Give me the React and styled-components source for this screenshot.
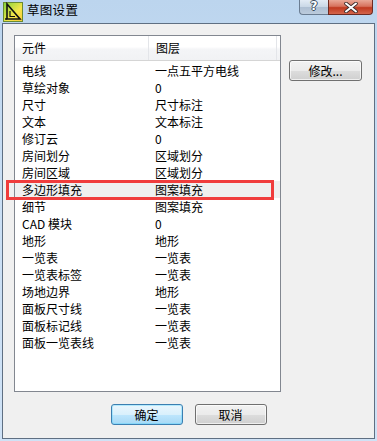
import React from "react";
import styled, { createGlobalStyle } from "styled-components";

const rows = [
  ["电线", "一点五平方电线"],
  ["草绘对象", "0"],
  ["尺寸", "尺寸标注"],
  ["文本", "文本标注"],
  ["修订云", "0"],
  ["房间划分", "区域划分"],
  ["房间区域", "区域划分"],
  ["多边形填充", "图案填充"],
  ["细节", "图案填充"],
  ["CAD 模块", "0"],
  ["地形", "地形"],
  ["一览表", "一览表"],
  ["一览表标签", "一览表"],
  ["场地边界", "地形"],
  ["面板尺寸线", "一览表"],
  ["面板标记线", "一览表"],
  ["面板一览表线", "一览表"],
];

const App = () => {
  return (
    <>
      <GlobalStyle />
      <Window>
        <TitleBar>
          <AppIcon width="20" height="20" viewBox="0 0 20 20">
            <defs>
              <linearGradient id="ig" x1="0" y1="0" x2="1" y2="1">
                <stop offset="0" stopColor="#7fd23a" />
                <stop offset="0.6" stopColor="#f4e64a" />
                <stop offset="1" stopColor="#f7c83a" />
              </linearGradient>
            </defs>
            <rect x="0.5" y="0.5" width="19" height="19" fill="url(#ig)" stroke="#6a8a30" />
            <path d="M4 2 L4 17 L17 17 Z" fill="none" stroke="#111" strokeWidth="1.6" />
            <path d="M7 9 L7 14.5 L12 14.5" fill="none" stroke="#111" strokeWidth="1.2" />
            <path d="M2 17 L4 17" stroke="#111" strokeWidth="1.6" />
          </AppIcon>
          <Title>草图设置</Title>
          <CaptionButtons>
            <HelpButton>?</HelpButton>
            <CloseButton>
              <svg width="14" height="11" viewBox="0 0 14 11">
                <path d="M2 1.5 L12 9.5 M12 1.5 L2 9.5" stroke="#3a2a2a" strokeWidth="3.6" strokeLinecap="round" />
                <path d="M2 1.5 L12 9.5 M12 1.5 L2 9.5" stroke="#fff" strokeWidth="2" strokeLinecap="round" />
              </svg>
            </CloseButton>
          </CaptionButtons>
        </TitleBar>
        <Panel>
          <Main>
            <ListBox>
              <Header>
                <HeadCell $w={134}>元件</HeadCell>
                <HeadCell $w={128}>图层</HeadCell>
                <HeadFill />
              </Header>
              <Rows>
                {rows.map(([a, b]) => (
                  <Row key={a} $hot={a === "多边形填充"}>
                    <Cell $w={134} $pad={7}>{a}</Cell>
                    <Cell $w={128} $pad={6}>{b}</Cell>
                  </Row>
                ))}
              </Rows>
            </ListBox>
            <Side>
              <Button $w={73}>修改...</Button>
            </Side>
          </Main>
          <Footer>
            <Button $w={72} $primary>确定</Button>
            <Button $w={72}>取消</Button>
          </Footer>
          <Marker />
        </Panel>
      </Window>
    </>
  );
};

export default App;

const GlobalStyle = createGlobalStyle`
  html, body {
    margin: 0;
    padding: 0;
    background: #c7ddf3;
  }
  * {
    box-sizing: border-box;
  }
`;

const Window = styled.div`
  width: 377px;
  height: 441px;
  display: flex;
  flex-direction: column;
  background: linear-gradient(180deg, #bcd5ee 0%, #c9def4 40%, #cfe2f6 100%);
  font-family: "Noto Sans CJK SC", "Liberation Sans", sans-serif;
  color: #000;
`;

const TitleBar = styled.div`
  height: 23px;
  display: flex;
  align-items: flex-start;
  padding-left: 3px;
  flex-shrink: 0;
`;

const AppIcon = styled.svg`
  margin-top: 2px;
  flex-shrink: 0;
`;

const Title = styled.div`
  margin-left: 4px;
  margin-top: 2px;
  font-size: 12.5px;
  line-height: 16px;
  letter-spacing: 0.3px;
  color: #000;
`;

const CaptionButtons = styled.div`
  margin-left: auto;
  margin-right: 4px;
  display: flex;
  height: 15px;
`;

const HelpButton = styled.div`
  width: 29px;
  height: 15px;
  border: 1px solid #6b7d92;
  border-top: none;
  border-right: none;
  border-radius: 0 0 0 4px;
  background: linear-gradient(180deg, #e2ebf5 0%, #c9d7e6 50%, #aebfd3 51%, #bccbdc 100%);
  color: #ffffff;
  font-family: "DejaVu Sans", sans-serif;
  font-weight: bold;
  font-size: 12px;
  line-height: 13px;
  text-align: center;
  text-shadow: 1px 0 0 #3a4a5c, -1px 0 0 #3a4a5c, 0 1px 0 #3a4a5c, 0 -1px 0 #3a4a5c;
`;

const CloseButton = styled.div`
  width: 45px;
  height: 15px;
  border: 1px solid #6e2a22;
  border-top: none;
  border-radius: 0 0 4px 0;
  background: linear-gradient(180deg, #e9a897 0%, #d7725d 45%, #c0391f 55%, #d4654c 100%);
  display: flex;
  align-items: center;
  justify-content: center;
`;

const Panel = styled.div`
  position: relative;
  margin: 0 2px 2px 2px;
  height: 416px;
  border: 1px solid #5f6f82;
  background: #f0f0f0;
  display: flex;
  flex-direction: column;
  padding: 11px 0 0 11px;
`;

const Main = styled.div`
  display: flex;
  gap: 8px;
`;

const ListBox = styled.div`
  width: 267px;
  height: 357px;
  border: 1px solid #828790;
  background: #fff;
  display: flex;
  flex-direction: column;
  overflow: hidden;
`;

const Header = styled.div`
  height: 25px;
  display: flex;
  background: linear-gradient(180deg, #ffffff 0%, #ffffff 45%, #f4f5f7 55%, #f1f2f4 100%);
  border-bottom: 1px solid #d5d5d5;
`;

const HeadCell = styled.div`
  width: ${(p) => p.$w}px;
  flex-shrink: 0;
  border-right: 1px solid #e3e5e9;
  padding-left: 7px;
  font-size: 12px;
  line-height: 24px;
`;

const HeadFill = styled.div`
  flex: 1;
`;

const Rows = styled.div`
  margin-top: 1px;
  display: flex;
  flex-direction: column;
`;

const Row = styled.div`
  height: 17px;
  display: flex;
  align-items: center;
  background: ${(p) => (p.$hot ? "#efefef" : "transparent")};
`;

const Cell = styled.div`
  width: ${(p) => p.$w}px;
  flex-shrink: 0;
  padding-left: ${(p) => p.$pad}px;
  font-size: 12px;
  line-height: 17px;
  white-space: nowrap;
`;

const Side = styled.div`
  padding-top: 25px;
`;

const Button = styled.div`
  width: ${(p) => p.$w}px;
  height: 21px;
  border: 1px solid ${(p) => (p.$primary ? "#3c7fb1" : "#707070")};
  border-radius: 3px;
  background: ${(p) =>
    p.$primary
      ? "linear-gradient(180deg, #eaf6fd 0%, #d9f0fc 50%, #bee6fd 51%, #a7d9f5 100%)"
      : "linear-gradient(180deg, #f2f2f2 0%, #ebebeb 50%, #dddddd 51%, #cfcfcf 100%)"};
  box-shadow: inset 0 0 0 1px ${(p) => (p.$primary ? "#48d2ff55" : "#ffffffaa")};
  display: flex;
  align-items: center;
  justify-content: center;
  font-size: 12px;
  line-height: 19px;
  color: #000;
`;

const Footer = styled.div`
  display: flex;
  justify-content: center;
  gap: 12px;
  margin-top: 12px;
  margin-left: -11px;
`;

const Marker = styled.div`
  position: absolute;
  left: 3px;
  top: 156px;
  width: 268px;
  height: 20px;
  border: 3px solid #f03c3c;
  pointer-events: none;
`;
